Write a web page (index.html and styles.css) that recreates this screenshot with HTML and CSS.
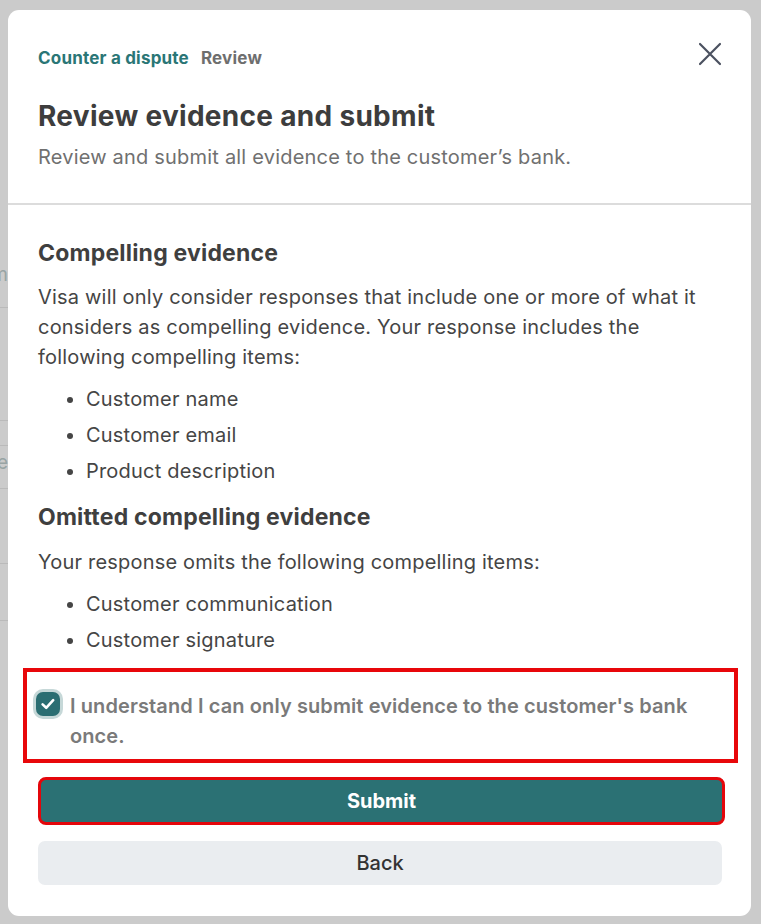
FILE: index.html
```html
<!DOCTYPE html>
<html lang="en">
<head>
<meta charset="utf-8">
<link rel="stylesheet" href="styles.css">
</head>
<body>
<div class="backdrop">
  <div class="bg-page">
    <span class="bg-letter bg-m">m</span>
    <span class="bg-letter bg-e">e</span>
    <div class="bg-line l1"></div>
    <div class="bg-line l2"></div>
    <div class="bg-line l3"></div>
    <div class="bg-line l4"></div>
    <div class="bg-line l5"></div>
    <div class="bg-line l6"></div>
  </div>
  <div class="modal">
    <header class="modal-header">
      <div class="top-row">
        <nav class="crumbs"><span class="crumb-link">Counter a dispute</span><span class="crumb-current">Review</span></nav>
        <button class="close" aria-label="Close">
          <svg width="24" height="24" viewBox="0 0 24 24"><path d="M2 2 L22 22 M22 2 L2 22" stroke="#4b5160" stroke-width="2.2" stroke-linecap="round" fill="none"/></svg>
        </button>
      </div>
      <h1 class="title">Review evidence and submit</h1>
      <p class="subtitle">Review and submit all evidence to the customer’s bank.</p>
    </header>
    <section class="modal-body">
      <h2 class="section-title">Compelling evidence</h2>
      <p class="text">Visa will only consider responses that include one or more of what it considers as compelling evidence. Your response includes the following compelling items:</p>
      <ul class="items">
        <li>Customer name</li>
        <li>Customer email</li>
        <li>Product description</li>
      </ul>
      <h2 class="section-title">Omitted compelling evidence</h2>
      <p class="text">Your response omits the following compelling items:</p>
      <ul class="items">
        <li>Customer communication</li>
        <li>Customer signature</li>
      </ul>
    </section>
    <div class="confirm">
      <span class="checkbox">
        <svg width="18" height="18" viewBox="0 0 18 18"><path d="M3.6 9.4 L7.2 12.8 L14.2 5.2" stroke="#fff" stroke-width="2.6" fill="none" stroke-linecap="round" stroke-linejoin="round"/></svg>
      </span>
      <span class="confirm-text">I understand I can only submit evidence to the customer's bank once.</span>
    </div>
    <div class="actions">
      <button class="btn btn-primary">Submit</button>
      <button class="btn btn-secondary">Back</button>
    </div>
  </div>
</div>
</body>
</html>
```

FILE: styles.css
```css
* { box-sizing: border-box; }
html, body { margin: 0; padding: 0; }
body {
  background: #cbcbcb;
  font-family: Inter, "Noto Sans", sans-serif;
  width: 761px;
  height: 924px;
  overflow: hidden;
}
.backdrop {
  position: relative;
  height: 924px;
  padding: 10px 10px 8px 8px;
}
.bg-page {
  position: absolute;
  left: 0;
  top: 0;
  width: 8px;
  height: 924px;
  overflow: hidden;
}
.bg-line {
  position: absolute;
  left: 0;
  width: 8px;
  height: 1px;
  background: #bababa;
}
.l1 { top: 307px; }
.l2 { top: 420px; }
.l3 { top: 445px; }
.l4 { top: 488px; }
.l5 { top: 563px; }
.l6 { top: 620px; }
.bg-letter {
  position: absolute;
  right: 0;
  font-size: 19px;
  line-height: 20px;
  color: #98a4a4;
}
.bg-m { top: 265px; }
.bg-e { top: 453px; }
.modal {
  background: #fff;
  border-radius: 11px;
  height: 906px;
  display: flex;
  flex-direction: column;
  overflow: hidden;
  position: relative;
}
.modal-header {
  padding: 36px 29px 0 30px;
  border-bottom: 2px solid #dcdcdc;
  height: 195px;
}
.top-row {
  display: flex;
  justify-content: space-between;
  align-items: center;
  height: 24px;
}
.crumbs {
  display: flex;
  gap: 12px;
  font-size: 17px;
  font-weight: 700;
  letter-spacing: 0.2px;
}
.crumb-link { color: #2a7676; }
.crumb-current { color: #6e6e6e; }
.close {
  background: none;
  border: 0;
  padding: 0;
  margin-right: 0;
  margin-top: -8px;
  display: flex;
}
.title {
  margin: 28px 0 0;
  font-size: 28px;
  font-weight: 700;
  color: #3d3d3d;
  line-height: 36px;
  letter-spacing: 0.3px;
}
.subtitle {
  margin: 9px 0 0;
  font-size: 20px;
  color: #707070;
  line-height: 28px;
  letter-spacing: 0.2px;
}
.modal-body {
  padding: 33px 29px 0 30px;
  color: #3d3d3d;
}
.section-title {
  margin: 0;
  font-size: 23px;
  font-weight: 700;
  line-height: 30px;
  color: #3f3f3f;
  letter-spacing: 0.2px;
}
.text {
  margin: 14px 0 0;
  font-size: 20px;
  line-height: 30px;
  color: #454545;
  letter-spacing: 0.2px;
}
.section-title + .text { margin-top: 14px; }
.items + .section-title + .text { margin-top: 15px; }
.items {
  margin: 9px 0 0;
  padding-left: 48px;
  font-size: 20px;
  line-height: 36px;
  color: #454545;
  letter-spacing: 0.2px;
}
.items + .section-title { margin-top: 13px; }
.confirm {
  margin: 10px 13px 0 15px;
  border: 4px solid #e8070a;
  padding: 19px 20px 13px 9px;
  display: flex;
  gap: 10px;
  align-items: flex-start;
  height: 95px;
}
.checkbox {
  flex: none;
  width: 24px;
  height: 24px;
  margin-top: 1px;
  border-radius: 7px;
  background: #2b6e72;
  box-shadow: 0 0 0 3px #c6d8d8;
  display: flex;
  align-items: center;
  justify-content: center;
}
.confirm-text {
  font-size: 20px;
  font-weight: 600;
  line-height: 30px;
  color: #7a7a7a;
  letter-spacing: 0.1px;
}
.actions {
  display: flex;
  flex-direction: column;
  gap: 16px;
  padding: 14px 29px 0 30px;
}
.btn {
  font-family: Inter, "Noto Sans", sans-serif;
  font-size: 20px;
  border-radius: 7px;
  width: 100%;
  cursor: pointer;
}
.btn-primary {
  height: 48px;
  background: #2b7174;
  color: #fff;
  font-weight: 700;
  border: 3px solid #e4060b;
  border-radius: 8px;
  width: calc(100% + 3px);
}
.btn-secondary {
  height: 44px;
  background: #eaedf0;
  color: #333;
  font-weight: 500;
  border: 0;
}
```
